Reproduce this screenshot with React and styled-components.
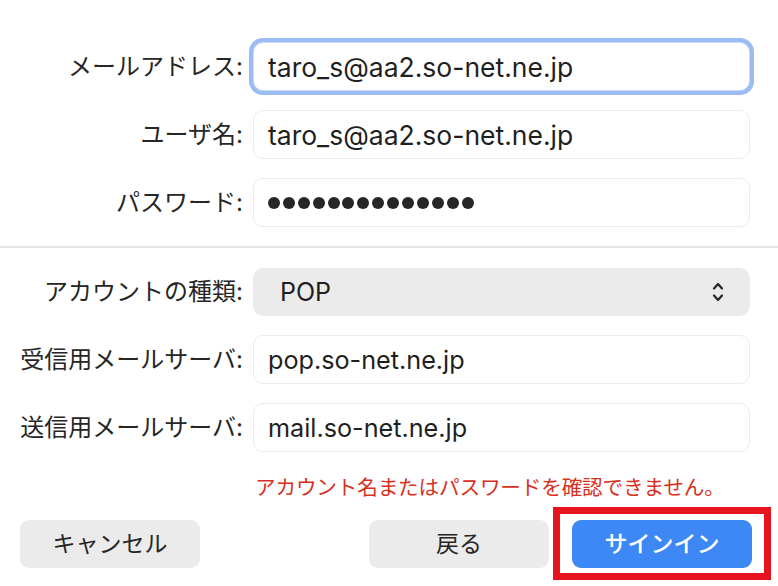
import React from 'react';
import styled, { createGlobalStyle } from 'styled-components';

const GlobalStyle = createGlobalStyle`
  html, body {
    margin: 0;
    padding: 0;
    background: #ffffff;
  }
  body {
    font-family: Inter, "Noto Sans CJK JP", "Liberation Sans", sans-serif;
    color: #262626;
    -webkit-font-smoothing: antialiased;
  }
`;

const Window = styled.div`
  width: 778px;
  height: 586px;
  background: #ffffff;
  overflow: hidden;
  display: flex;
  flex-direction: column;

  & > * {
    flex-shrink: 0;
  }
`;

const Section = styled.div`
  display: grid;
  grid-template-columns: 243px 497px;
  column-gap: 10px;
  row-gap: 19px;
  align-items: center;
  padding: ${({ $top }) => $top}px 28px ${({ $bottom }) => $bottom}px 0;
`;

const Divider = styled.div`
  height: 2px;
  background: #e4e4e4;
`;

const Label = styled.div`
  text-align: right;
  font-size: 24px;
  line-height: 30px;
  color: #262626;
  white-space: nowrap;
`;

const Field = styled.div`
  box-sizing: border-box;
  height: 49px;
  display: flex;
  align-items: center;
  padding-left: 14px;
  border: 1.5px solid #ececec;
  border-radius: 10px;
  background: #ffffff;
  font-size: ${({ $size }) => $size || 26.5}px;
  line-height: 30px;
  color: #1f1f1f;
  white-space: nowrap;
  box-shadow: ${({ $focused }) => ($focused ? '0 0 0 4px #9bbbf3' : 'none')};
  border-color: ${({ $focused }) => ($focused ? '#c9d9f6' : '#ececec')};
`;

const Dots = styled.div`
  display: flex;
  gap: 2.9px;
`;

const Dot = styled.span`
  width: 12px;
  height: 12px;
  border-radius: 50%;
  background: #262626;
`;

const Select = styled.div`
  box-sizing: border-box;
  height: 48px;
  display: flex;
  align-items: center;
  justify-content: space-between;
  padding: 0 26px 0 27px;
  border-radius: 10px;
  background: #ebebeb;
  font-size: 25px;
  line-height: 30px;
  color: #1f1f1f;
`;

const ErrorText = styled.div`
  margin: 22px 0 0 255px;
  font-size: 20.6px;
  line-height: 28px;
  letter-spacing: -0.15px;
  color: #d6311e;
  white-space: nowrap;
`;

const Footer = styled.div`
  display: flex;
  align-items: center;
  margin-top: 5px;
  padding: 0 7px 0 20px;
`;

const Button = styled.button`
  box-sizing: border-box;
  width: 180px;
  height: 48px;
  border: none;
  border-radius: 9px;
  background: ${({ $primary }) => ($primary ? '#3d88f5' : '#ebebeb')};
  color: ${({ $primary }) => ($primary ? '#ffffff' : '#262626')};
  font-family: inherit;
  font-size: 23px;
  font-weight: ${({ $primary }) => ($primary ? 500 : 400)};
  line-height: 30px;
  padding: 0;
`;

const Spacer = styled.div`
  flex: 1;
`;

const Highlight = styled.div`
  margin-left: 4px;
  padding: 6px 12px 5px;
  border: 7px solid #e8141d;
  display: flex;
`;

const Chevrons = () => (
  <svg width="12" height="22" viewBox="0 0 12 22" fill="none" stroke="#262626" strokeWidth="2.2" strokeLinecap="round" strokeLinejoin="round">
    <path d="M2 7.5 L6 3 L10 7.5" />
    <path d="M2 14.5 L6 19 L10 14.5" />
  </svg>
);

export default function App() {
  return (
    <Window>
      <GlobalStyle />
      <Section $top={42} $bottom={19}>
        <Label>メールアドレス:</Label>
        <Field $focused>taro_s@aa2.so-net.ne.jp</Field>
        <Label>ユーザ名:</Label>
        <Field>taro_s@aa2.so-net.ne.jp</Field>
        <Label>パスワード:</Label>
        <Field>
          <Dots>
            {Array.from({ length: 14 }).map((_, i) => (
              <Dot key={i} />
            ))}
          </Dots>
        </Field>
      </Section>
      <Divider />
      <Section $top={20} $bottom={0}>
        <Label>アカウントの種類:</Label>
        <Select>
          <span>POP</span>
          <Chevrons />
        </Select>
        <Label>受信用メールサーバ:</Label>
        <Field $size={25.2}>pop.so-net.ne.jp</Field>
        <Label>送信用メールサーバ:</Label>
        <Field $size={25.2}>mail.so-net.ne.jp</Field>
      </Section>
      <ErrorText>アカウント名またはパスワードを確認できません。</ErrorText>
      <Footer>
        <Button>キャンセル</Button>
        <Spacer />
        <Button>戻る</Button>
        <Highlight>
          <Button $primary>サインイン</Button>
        </Highlight>
      </Footer>
    </Window>
  );
}
